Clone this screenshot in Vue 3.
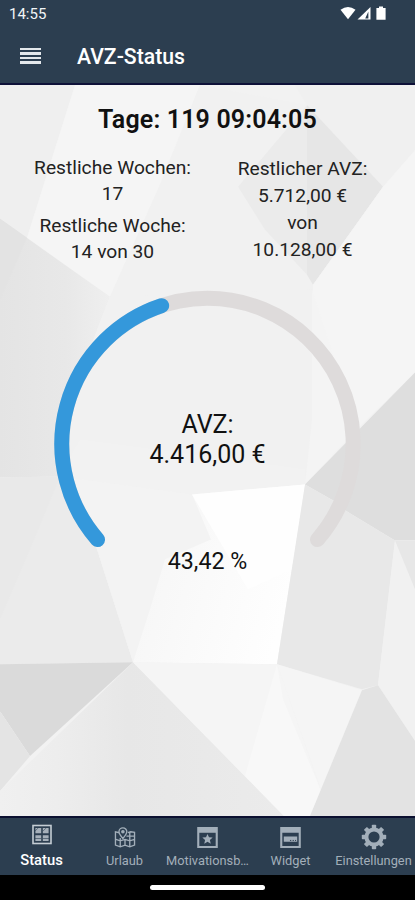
<template>
  <div class="phone">
    <!-- 状态栏 -->
    <div class="status-bar">
      <span class="clock">14:55</span>
      <svg class="status-icons" width="48" height="16" viewBox="0 0 48 16">
        <path d="M0.5 3.8Q8 -2 15.5 3.8L8 13.2Z" fill="#fff" />
        <path d="M17.5 13.5L30.5 1V13.5Z" fill="#fff" />
        <path d="M25.2 12.4L28.4 5.5V12.4Z" fill="#2c3e50" />
        <path d="M39 0.5h4v1.4h2.6v11.8h-9.2V1.9H39Z" fill="#fff" />
      </svg>
    </div>

    <!-- 标题栏 -->
    <header class="app-bar">
      <button class="menu-btn" aria-label="Menü">
        <span v-for="n in 4" :key="n"></span>
      </button>
      <h1>AVZ-Status</h1>
    </header>

    <main class="content">
      <svg class="backdrop" viewBox="0 85 415 732" preserveAspectRatio="none">
        <defs>
          <linearGradient id="fold" x1="0" x2="1" y1="0" y2="0">
            <stop offset="0" stop-color="#f0f0f0" />
            <stop offset="0.2" stop-color="#ededed" />
            <stop offset="0.45" stop-color="#e7e7e7" />
            <stop offset="1" stop-color="#ebebeb" />
          </linearGradient>
          <linearGradient id="shade" x1="0" x2="1" y1="0" y2="0">
            <stop offset="0" stop-color="#e4e4e4" />
            <stop offset="0.6" stop-color="#e8e8e8" />
            <stop offset="1" stop-color="#efefef" />
          </linearGradient>
          <linearGradient id="light" x1="0" x2="1" y1="0" y2="0.3">
            <stop offset="0" stop-color="#f5f5f5" />
            <stop offset="1" stop-color="#fefefe" />
          </linearGradient>
        </defs>
        <polygon v-for="(s, i) in shapes" :key="i" :points="s.points" :fill="s.fill" />
      </svg>

      <div class="panel">
        <h2 class="countdown">Tage: 119 09:04:05</h2>

        <div class="stats">
          <div class="stat-col left">
            <p>Restliche Wochen:</p>
            <p>17</p>
            <p class="second">Restliche Woche:</p>
            <p>14 von 30</p>
          </div>
          <div class="stat-col right">
            <p>Restlicher AVZ:</p>
            <p>5.712,00 €</p>
            <p>von</p>
            <p>10.128,00 €</p>
          </div>
        </div>

        <!-- 进度圆环 -->
        <div class="gauge">
          <svg width="308" height="266" viewBox="0 0 308 266">
            <path class="track" :d="arcPath(1)" />
            <path class="value" :d="arcPath(progress)" />
          </svg>
          <div class="gauge-text">
            <p>AVZ:</p>
            <p>4.416,00 €</p>
          </div>
        </div>
        <p class="percent">43,42 %</p>
      </div>
    </main>

    <!-- 底部导航 -->
    <nav class="tab-bar">
      <div
        v-for="tab in tabs"
        :key="tab.id"
        class="tab"
        :class="{ active: activeTab === tab.id }"
        @click="activeTab = tab.id"
      >
        <svg v-if="tab.id === 'status'" width="20" height="20" viewBox="0 0 20 20">
          <rect x="1" y="1" width="18" height="18" fill="none" stroke="currentColor" stroke-width="1.6" />
          <path d="M3.4 3.4h5.8v5.4H3.4zM10.800 3.400h5.800v5.400h-5.800zM3.400 10.800h5.800v5.800H3.400zM10.800 10.800h5.800v5.800h-5.800z" fill="currentColor" opacity="0.8" />
          <path d="M3 6.600l3-3M11 6.600l3-3M3 14h6M11 14h6" stroke="#2c3e50" stroke-width="0.600" />
        </svg>
        <svg v-else-if="tab.id === 'urlaub'" width="22" height="22" viewBox="0 0 22 22" fill="none" stroke="currentColor" stroke-width="1.4">
          <path d="M5 6L1 5v14l5 1.8 5-1.8 5 1.8 5-1.8V5.5l-4-.5-3 1M1.5 13l4.5 1.5 5-1.5 5 1.5 5-1.5M6 11.5v9M11 13v6M16 6v14.500M12.500 9.500l8 0" />
          <path d="M8.800 12C6 8.800 4.700 7 4.700 5A4.100 4.100 0 0 1 12.900 5C12.900 7 11.500 8.800 8.800 12Z" fill="#2c3e50" />
          <circle cx="8.800" cy="5" r="1.200" fill="currentColor" />
        </svg>
        <svg v-else-if="tab.id === 'motivation'" width="21" height="20" viewBox="0 0 20 20">
          <path d="M1.200 1h17.600v18H1.200z" fill="none" stroke="currentColor" stroke-width="2" />
          <path d="M1 1h18v4.500H1z" fill="currentColor" />
          <path d="M10 6.600l1.400 3.100 3.500.3-2.600 2.400.8 3.500-3.100-1.900-3.100 1.900.8-3.500-2.600-2.400 3.500-.3z" fill="currentColor" />
        </svg>
        <svg v-else-if="tab.id === 'widget'" width="21" height="20" viewBox="0 0 20 20">
          <path d="M1.200 1h17.600v18H1.200z" fill="none" stroke="currentColor" stroke-width="2" />
          <path d="M1 1h18v4.500H1zM3.600 9h12.800v5H3.600z" fill="currentColor" />
          <path d="M9.500 12.800h1.200M12 12.800h1.200M14.300 12.800h1" stroke="#2c3e50" stroke-width="0.900" />
        </svg>
        <svg v-else class="gear" width="26" height="26" viewBox="0 0 26 26">
          <g fill="currentColor">
            <rect v-for="n in 8" :key="n" x="10.800" y="0.800" width="4.400" height="6" rx="0.800" :transform="`rotate(${n * 45} 13 13)`" />
          </g>
          <circle cx="13" cy="13" r="7.600" fill="none" stroke="currentColor" stroke-width="4" />
        </svg>
        <span class="tab-label">{{ tab.label }}</span>
      </div>
    </nav>

    <div class="home-area">
      <div class="home-indicator"></div>
    </div>
  </div>
</template>

<script setup>
import { ref } from 'vue'

const activeTab = ref('status')
const progress = 0.43

const tabs = [
  { id: 'status', label: 'Status' },
  { id: 'urlaub', label: 'Urlaub' },
  { id: 'motivation', label: 'Motivationsb…' },
  { id: 'widget', label: 'Widget' },
  { id: 'einstellungen', label: 'Einstellungen' }
]

// Low-poly wallpaper
const shapes = [
  { points: '0,85 415,85 415,817 0,817', fill: '#f2f2f2' },
  { points: '0,85 75,85 27,238 0,219', fill: '#efefef' },
  { points: '75,85 200,85 160,185 110,297 27,238', fill: '#f5f5f5' },
  { points: '200,85 307,105 238,187 313,282 313,300 110,297 160,185', fill: '#f1f1f1' },
  { points: '295,85 415,85 415,170 383,187 307,105', fill: '#f0f0f0' },
  { points: '0,219 83,278 110,297 80,375 60,477 0,478', fill: 'url(#shade)' },
  { points: '0,219 27,238 0,300', fill: '#e3e3e3' },
  { points: '307,105 307,275 265,230 238,187', fill: '#ebebeb' },
  { points: '307,105 383,187 313,285 307,275', fill: '#e6e6e6' },
  { points: '383,187 415,150 415,373 357,430 313,300 313,285', fill: '#f5f5f5' },
  { points: '110,297 313,290 312,478 192,495 60,477 80,375', fill: '#f1f1f1' },
  { points: '312,290 357,430 305,485 312,420', fill: '#f4f4f4' },
  { points: '60,477 80,440 305,470 305,485 192,495', fill: '#f2f2f2' },
  { points: '0,478 60,477 97,550 133,663 0,665', fill: '#ebebeb' },
  { points: '0,478 60,477 30,550 0,620', fill: '#e9e9e9' },
  { points: '60,477 192,495 215,545 145,640 133,663 97,550', fill: '#f3f3f3' },
  { points: '192,495 305,485 277,665 133,663 150,610 165,560 211,540', fill: 'url(#light)' },
  { points: '192,495 305,485 292,570 248,590', fill: '#fefefe' },
  { points: '415,373 305,485 335,502 347,512 395,541 415,541', fill: '#dedede' },
  { points: '305,485 335,502 347,512 395,541 378,686 362,690 277,665', fill: '#e8e8e8' },
  { points: '395,541 415,541 415,742 378,686', fill: '#f1f1f1' },
  { points: '395,541 415,541 415,590', fill: '#e7e7e7' },
  { points: '0,665 133,663 30,757 0,712', fill: '#dadada' },
  { points: '0,712 30,757 0,792', fill: '#e4e4e4' },
  { points: '133,663 0,792 0,817 284,817', fill: 'url(#fold)' },
  { points: '133,663 277,665 321,792 310,817 284,817', fill: '#f5f5f5' },
  { points: '277,665 283,700 321,792 310,817 284,817 245,777', fill: '#f8f8f8' },
  { points: '277,665 362,691 321,791', fill: '#f5f5f5' },
  { points: '362,691 378,686 415,742 415,817 310,817', fill: '#e3e3e3' }
]

// Gauge geometry, angles in degrees
const CENTER = { x: 153.5, y: 154 }
const RADIUS = 145.7
const START = 221
const SWEEP = 262

function pointAt(angle) {
  const rad = (angle * Math.PI) / 180
  return `${CENTER.x + RADIUS * Math.cos(rad)} ${CENTER.y - RADIUS * Math.sin(rad)}`
}

function arcPath(share) {
  const sweep = SWEEP * share
  const large = sweep > 180 ? 1 : 0
  return `M${pointAt(START)}A${RADIUS} ${RADIUS} 0 ${large} 1 ${pointAt(START - sweep)}`
}
</script>

<style>
body {
  margin: 0;
  background: #000;
}
</style>

<style scoped>
.phone {
  width: 415px;
  height: 900px;
  display: flex;
  flex-direction: column;
  overflow: hidden;
  font-family: Roboto, "Liberation Sans", sans-serif;
  background: #2c3e50;
}

h1,
h2,
p {
  margin: 0;
}

.status-bar {
  display: flex;
  justify-content: space-between;
  align-items: center;
  height: 28px;
  padding: 0 27px 0 9px;
  color: #f2f5f7;
}

.clock {
  font-size: 15px;
}

.app-bar {
  display: flex;
  align-items: center;
  box-sizing: border-box;
  height: 57px;
  gap: 36px;
  padding: 2px 20px 0 20px;
  border-bottom: 2px solid #0e1138;
}

.menu-btn {
  display: flex;
  flex-direction: column;
  gap: 2px;
  width: 21px;
  margin-top: -2px;
  padding: 0;
  border: 0;
  background: none;
}

.menu-btn span {
  height: 2.500px;
  background: #e4e8ec;
}

h1 {
  color: #fff;
  font-size: 21.200px;
  font-weight: 500;
}

.content {
  display: grid;
  flex: 1;
  min-height: 0;
}

.backdrop,
.panel {
  grid-area: 1 / 1;
  width: 415px;
  height: 731px;
}

.panel {
  z-index: 1;
  display: flex;
  flex-direction: column;
  align-items: center;
  color: #111;
}

.countdown {
  margin-top: 19px;
  line-height: 32px;
  font-size: 25px;
  font-weight: 600;
  letter-spacing: 0.150px;
}

.stats {
  display: grid;
  grid-template-columns: 190px 190px;
  width: 380px;
  height: 130px;
  margin-top: 19px;
  text-align: center;
  font-size: 19.200px;
  color: #222;
}

.stat-col.left {
  line-height: 26px;
}

.stat-col .second {
  margin-top: 6px;
}

.stat-col.right {
  line-height: 27px;
}

.gauge {
  display: grid;
  width: 308px;
  height: 266px;
  margin-top: 5px;
}

.gauge > * {
  grid-area: 1 / 1;
}

.gauge path {
  fill: none;
  stroke-width: 15px;
  stroke-linecap: round;
}

.gauge .track {
  stroke: #dedbdb;
}

.gauge .value {
  stroke: #3498db;
}

.gauge-text {
  padding-top: 120px;
  text-align: center;
  font-size: 25px;
  line-height: 29.500px;
}

.percent {
  margin-top: -9px;
  font-size: 23.200px;
  line-height: 28px;
}

.tab-bar {
  display: grid;
  grid-template-columns: repeat(5, 83px);
  box-sizing: border-box;
  height: 59px;
  border-top: 2px solid #0b1030;
  background: #2c3e50;
}

.tab {
  display: flex;
  flex-direction: column;
  align-items: center;
  min-width: 0;
  padding-top: 9px;
  color: #a3afba;
  cursor: pointer;
}

.tab svg {
  flex: none;
  height: 21px;
}

.tab-label {
  margin-top: 5px;
  line-height: 16px;
  font-size: 12.800px;
  white-space: nowrap;
}

.tab.active {
  padding-top: 6px;
  color: #c5cdd4;
}

.tab.active .tab-label {
  margin-top: 7px;
  color: #fff;
  font-size: 14.800px;
  font-weight: 500;
}

.tab .gear {
  height: 26px;
  margin: -3px 0 -2px;
}

.home-area {
  display: flex;
  align-items: center;
  justify-content: center;
  height: 25px;
  background: #000;
}

.home-indicator {
  width: 115px;
  height: 5px;
  border-radius: 3px;
  background: #fff;
}
</style>
